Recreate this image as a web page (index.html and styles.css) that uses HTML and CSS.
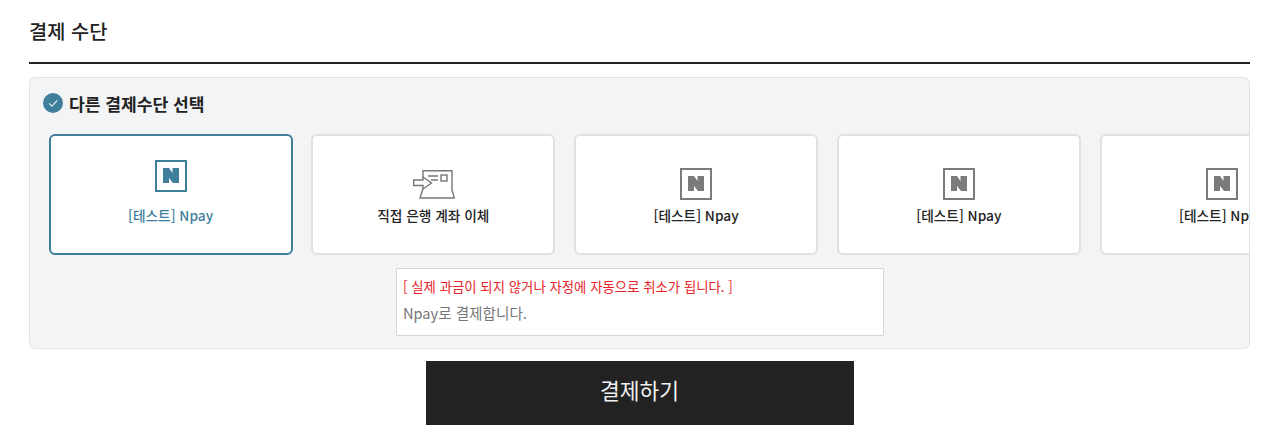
FILE: index.html
```html
<!DOCTYPE html>
<html lang="ko">
  <head>
    <meta charset="UTF-8" />
    <meta name="viewport" content="width=device-width, initial-scale=1.0" />
    <title>결제 수단</title>
    <link rel="stylesheet" href="styles.css">
  </head>
  <body>
    <div class="container">
      <h2 class="section-title">결제 수단</h2>
      <div class="pay-panel">
        <div class="pay-head">
          <svg class="check" viewBox="0 0 20 20" width="20" height="20">
            <circle cx="10" cy="10" r="10" fill="#3f7f9c" />
            <path d="M6 10.4l2.8 2.7L14.2 7.5" fill="none" stroke="#dfeaf0" stroke-width="1.1" />
          </svg>
          <span>다른 결제수단 선택</span>
        </div>
        <div class="pay-methods">
          <div class="pay-card selected">
            <svg class="npay" viewBox="0 0 32 32" width="32" height="32">
              <rect x="1" y="1" width="30" height="30" fill="none" stroke="currentColor" stroke-width="2" />
              <path d="M8 8h6l3.500 5V8H24v15h-6l-4-5v5H8z" fill="currentColor" />
            </svg>
            <span>[테스트] Npay</span>
          </div>
          <div class="pay-card">
            <svg class="bank" viewBox="0 0 42 29" width="42" height="29">
              <g fill="none" stroke="#777" stroke-width="1.4">
                <path d="M10 7V.7h29V20l2.300 8H7l3-9.500" />
                <path d="M.7 10h9.300V7l8.500 6-8.500 6v-3.500H.7z" />
                <path d="M15 6h10M18 10h7" />
                <rect x="28" y="5" width="6" height="6" />
              </g>
            </svg>
            <span>직접 은행 계좌 이체</span>
          </div>
          <div class="pay-card">
            <svg class="npay" viewBox="0 0 32 32" width="32" height="32">
              <rect x="1" y="1" width="30" height="30" fill="none" stroke="currentColor" stroke-width="2" />
              <path d="M8 8h6l3.500 5V8H24v15h-6l-4-5v5H8z" fill="currentColor" />
            </svg>
            <span>[테스트] Npay</span>
          </div>
          <div class="pay-card">
            <svg class="npay" viewBox="0 0 32 32" width="32" height="32">
              <rect x="1" y="1" width="30" height="30" fill="none" stroke="currentColor" stroke-width="2" />
              <path d="M8 8h6l3.500 5V8H24v15h-6l-4-5v5H8z" fill="currentColor" />
            </svg>
            <span>[테스트] Npay</span>
          </div>
          <div class="pay-card">
            <svg class="npay" viewBox="0 0 32 32" width="32" height="32">
              <rect x="1" y="1" width="30" height="30" fill="none" stroke="currentColor" stroke-width="2" />
              <path d="M8 8h6l3.500 5V8H24v15h-6l-4-5v5H8z" fill="currentColor" />
            </svg>
            <span>[테스트] Npay</span>
          </div>
        </div>
        <div class="pay-info">
          <p class="warn">[ 실제 과금이 되지 않거나 자정에 자동으로 취소가 됩니다. ]</p>
          <p class="desc">Npay로 결제합니다.</p>
        </div>
      </div>
      <button class="pay-btn">결제하기</button>
    </div>
  </body>
</html>
```

FILE: styles.css
```css
body {
  font-family: "Noto Sans CJK KR", "Noto Sans", sans-serif;
  background-color: #fff;
  color: #222;
  margin: 0;
  padding: 0;
}

.container {
  margin: 0 30px 0 29px;
  padding-top: 17px;
}

.section-title {
  font-size: 19.8px;
  font-weight: 500;
  line-height: 28px;
  margin: 0;
  padding-bottom: 17px;
  border-bottom: 2px solid #222;
}

.pay-panel {
  margin-top: 13px;
  height: 270px;
  background-color: #f3f4f6;
  border: 1px solid #e2e3e5;
  border-radius: 6px;
  overflow: hidden;
}

.pay-head {
  display: flex;
  align-items: center;
  gap: 6px;
  padding: 14px 0 0 13px;
  height: 22px;
  font-size: 17.1px;
  font-weight: 700;
  color: #222;
}

.pay-methods {
  display: flex;
  gap: 18.75px;
  margin-top: 20px;
  padding-left: 18.6px;
  overflow: hidden;
}

.pay-card {
  flex: 0 0 244px;
  height: 121px;
  box-sizing: border-box;
  background-color: #fff;
  border: 2px solid #e0e1e3;
  border-radius: 6px;
  display: flex;
  flex-direction: column;
  align-items: center;
  font-size: 13.7px;
  font-weight: 500;
  color: #222;
}

.pay-card span {
  line-height: 20px;
}

.npay {
  color: #7b7b7b;
  margin-top: 32px;
  margin-bottom: 5px;
}

.bank {
  margin: 34px 0 6px 2px;
}

.pay-card.selected {
  border-color: #3f7f9c;
  color: #3f7f9c;
}

.selected .npay {
  color: #3f7f9c;
  margin-top: 24px;
  margin-bottom: 13px;
}

.pay-info {
  width: 488px;
  height: 68px;
  box-sizing: border-box;
  margin: 13px 0 0 366px;
  padding: 6px 6px 0 6px;
  background-color: #fff;
  border: 1px solid #d5d6d8;
}

.pay-info p {
  margin: 0;
  font-size: 13.4px;
  line-height: 22px;
}

.warn {
  color: #e8262a;
}

.pay-info .desc {
  color: #777;
  font-size: 14.6px;
  margin-top: 5px;
}

.pay-btn {
  display: block;
  width: 428px;
  height: 64px;
  margin: 12px auto 0 auto;
  padding: 0 0 8px 0;
  border: none;
  background-color: #222;
  color: #f2f2f2;
  font-family: inherit;
  font-size: 21.5px;
  cursor: pointer;
}
```
